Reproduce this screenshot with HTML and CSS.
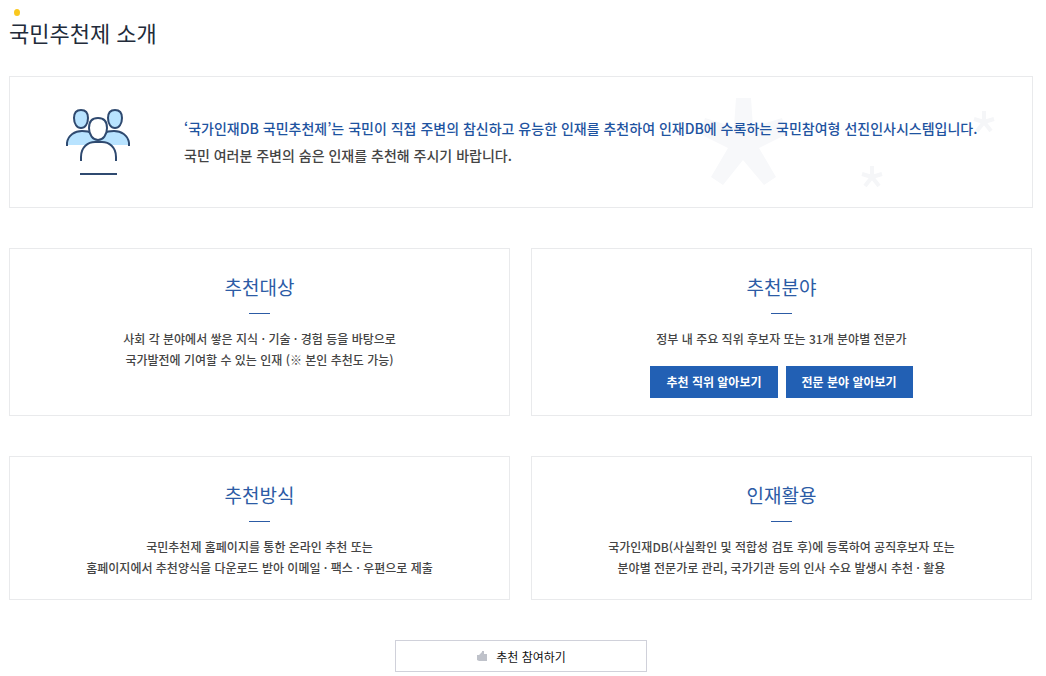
FILE: index.html
```html
<!DOCTYPE html>
<html lang="ko">
<head>
    <meta charset="UTF-8">
    <meta name="viewport" content="width=device-width, initial-scale=1.0">
    <title>국민추천제 소개</title>
    <link rel="stylesheet" href="styles.css">
</head>
<body>
    <main class="content">
        <h1 class="title">국민추천제 소개</h1>
        <section class="intro">
            <svg class="people" width="66" height="68" viewBox="0 0 66 68" aria-hidden="true">
                <g fill="#b8e3ff" stroke="#2f4a70" stroke-width="2">
                    <path stroke="none" d="M1 37v-3c2-7 8-11 16-11h32c8 0 14 4 16 11v3z"/>
                    <path fill="none" d="M2 38v-3c1-8 8-12 15-12 4 0 7 0 9 2M64 38v-3c-1-8-8-12-15-12-4 0-7 0-9 2"/>
                    <path d="M16 2c5 0 7 3 7 8 0 6-3 10-7 10S9 16 9 10c0-5 2-8 7-8zM50 2c5 0 7 3 7 8 0 6-3 10-7 10s-7-4-7-10c0-5 2-8 7-8z"/>
                    <path fill="#fff" d="M16 53v-4c0-10 7-15 14-15h7c7 0 14 5 14 15v4"/>
                    <path fill="#fff" d="M33 10c6 0 9 4 9 10 0 7-4 12-9 12s-9-5-9-12c0-6 3-10 9-10z"/>
                    <path fill="none" d="M15 66h37"/>
                </g>
            </svg>
            <div class="intro-text">
                <p><strong>‘국가인재DB 국민추천제’는 국민이 직접 주변의 참신하고 유능한 인재를 추천하여 인재DB에 수록하는 국민참여형 선진인사시스템입니다.</strong></p>
                <p>국민 여러분 주변의 숨은 인재를 추천해 주시기 바랍니다.</p>
            </div>
            <svg class="stars" width="340" height="130" viewBox="0 0 340 130" aria-hidden="true">
                <path d="M44 21h15l2 29 29-9 5 16-28 14 17 29-12 8-21-25-20 25-12-8 17-29L8 57l5-16 29 9z"/>
                <path class="small-star" d="M180 100V89M180 100l10-3M180 100l7 9M180 100l-7 9M180 100l-10-3"/>
                <path class="small-star" d="M292 45V34M292 45l10-3M292 45l7 9M292 45l-7 9M292 45l-10-3"/>
            </svg>
        </section>
        <div class="cards">
            <section class="card">
                <h2>추천대상</h2>
                <p>사회 각 분야에서 쌓은 지식 · 기술 · 경험 등을 바탕으로<br>국가발전에 기여할 수 있는 인재 (※ 본인 추천도 가능)</p>
            </section>
            <section class="card">
                <h2>추천분야</h2>
                <p>정부 내 주요 직위 후보자 또는 31개 분야별 전문가</p>
                <div class="buttons">
                    <button type="button" class="button">추천 직위 알아보기</button>
                    <button type="button" class="button">전문 분야 알아보기</button>
                </div>
            </section>
            <section class="card">
                <h2>추천방식</h2>
                <p>국민추천제 홈페이지를 통한 온라인 추천 또는<br>홈페이지에서 추천양식을 다운로드 받아 이메일 · 팩스 · 우편으로 제출</p>
            </section>
            <section class="card">
                <h2>인재활용</h2>
                <p>국가인재DB(사실확인 및 적합성 검토 후)에 등록하여 공직후보자 또는<br>분야별 전문가로 관리, 국가기관 등의 인사 수요 발생시 추천 · 활용</p>
            </section>
        </div>
        <a class="join" href="#">
            <svg width="12" height="12" viewBox="0 0 12 12" aria-hidden="true">
                <path fill="#bfc2ca" d="M1 5h2l3-3V1h2v3h3v7H3l-2-1z"/>
            </svg>
            추천 참여하기
        </a>
    </main>
</body>
</html>
```
FILE: styles.css
```css
* {
    box-sizing: border-box;
}
body {
    margin: 0;
    background: #fff;
    color: #444;
    font-family: "Noto Sans CJK KR", sans-serif;
    font-size: 12px;
}
.content {
    padding: 9px 13px 4px 9px;
}
h1, h2, p {
    margin: 0;
}
.title {
    margin-bottom: 28px;
    color: #222b3a;
    font-size: 22px;
    font-weight: 400;
    line-height: 32px;
}
/* yellow dot over the first letter */
.title::before {
    content: "";
    display: block;
    width: 6px;
    height: 7px;
    margin-left: 5px;
    border-radius: 50%;
    background: #fac81e;
}
.intro {
    position: relative;
    display: flex;
    align-items: center;
    gap: 53px;
    min-height: 132px;
    padding: 0 40px 0 55px;
    border: 1px solid #e9eaec;
}
.people {
    flex: none;
}
.intro-text {
    position: relative;
    z-index: 1;
    font-size: 14px;
    font-weight: 500;
    line-height: 27px;
}
.intro-text strong {
    color: #1e53a0;
    font-weight: 500;
}
.stars {
    position: absolute;
    top: 0;
    right: 0;
    fill: #f7f8fa;
}
.small-star {
    stroke: #f5f6f8;
    stroke-width: 4;
}
.cards {
    display: grid;
    grid-template-columns: 1fr 1fr;
    gap: 40px 21px;
    margin: 40px 1px 40px 0;
}
.card {
    min-height: 144px;
    padding: 24px 16px 17px;
    border: 1px solid #e9eaec;
    text-align: center;
}
.card h2 {
    color: #2c5ba5;
    font-size: 19px;
    font-weight: 400;
    line-height: 28px;
}
.card h2::after {
    content: "";
    display: block;
    width: 21px;
    height: 1px;
    margin: 12px auto 14px;
    background: #2c5ba5;
}
.card p {
    font-weight: 500;
    line-height: 21px;
}
.buttons {
    display: flex;
    justify-content: center;
    gap: 8px;
    margin-top: 17px;
}
.button {
    height: 32px;
    padding: 0 16px 1px;
    border: 0;
    background: #2260b4;
    color: #fff;
    font: bold 12px "Noto Sans CJK KR", sans-serif;
    cursor: pointer;
}
.join {
    display: flex;
    align-items: center;
    justify-content: center;
    gap: 8px;
    width: 252px;
    height: 32px;
    margin: 0 auto;
    border: 1px solid #d0d1da;
    color: #111;
    text-decoration: none;
}
```
